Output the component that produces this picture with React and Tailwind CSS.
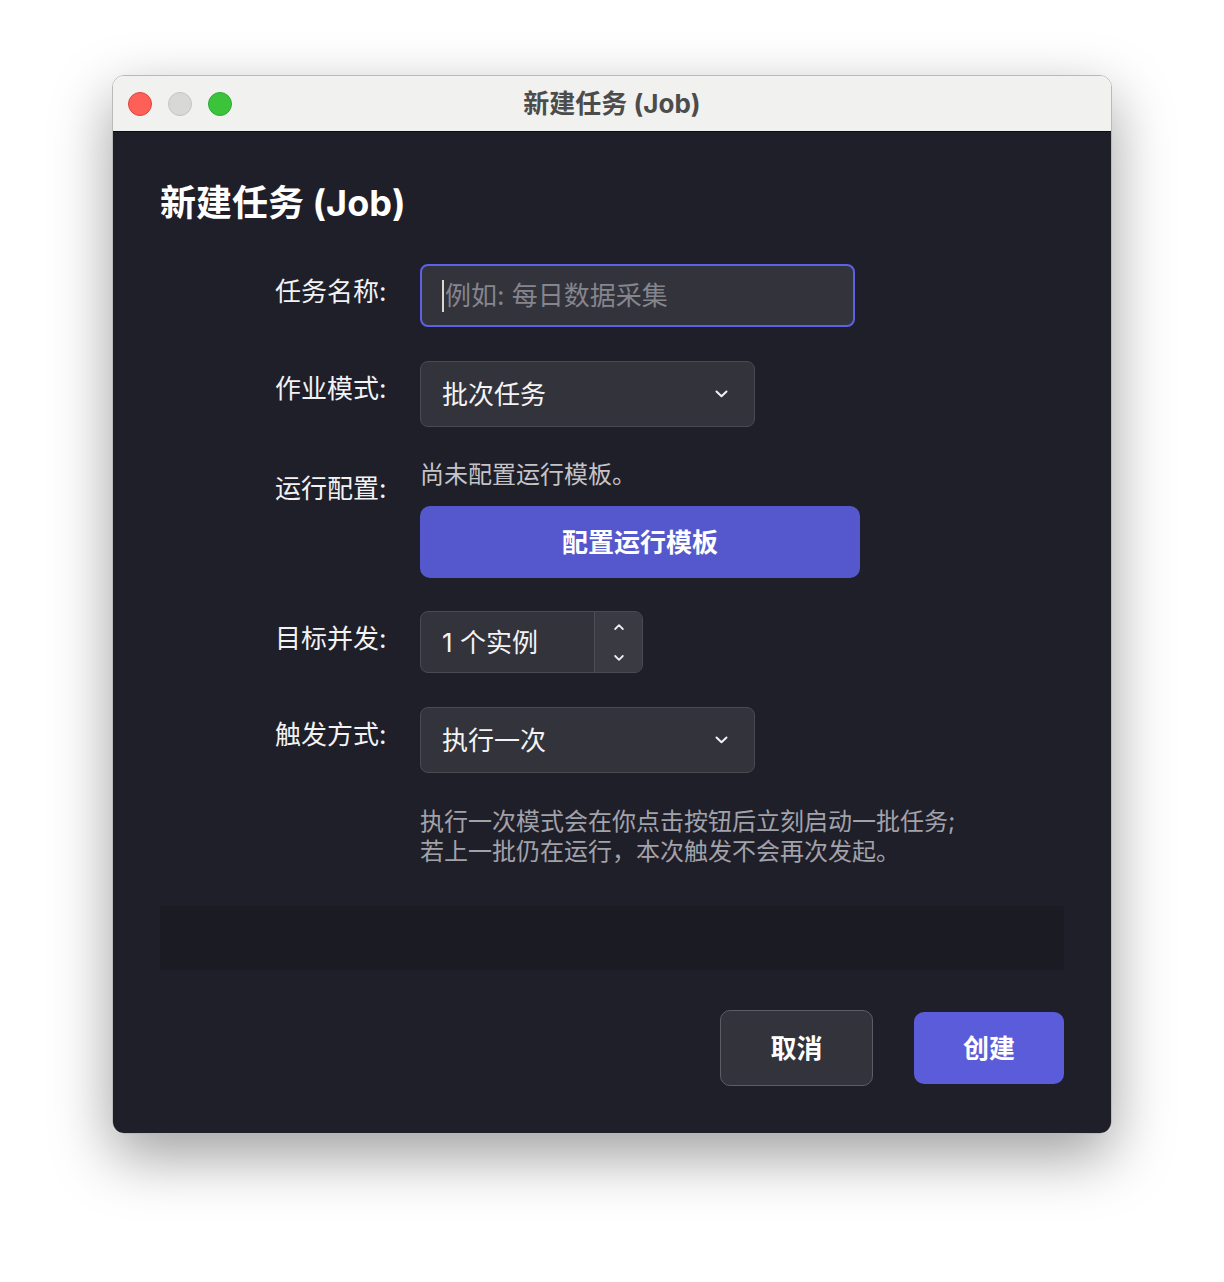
import React from "react";

const FONT = { fontFamily: 'Inter, "Noto Sans CJK SC", "Noto Sans", sans-serif' };

function Chevron({ className = "" }) {
  return (
    <svg width="13" height="8" viewBox="0 0 13 8" className={className} fill="none">
      <path d="M1.5 1.5 L6.5 6.3 L11.5 1.5" stroke="#f2f2f4" strokeWidth="2" strokeLinecap="round" strokeLinejoin="round" />
    </svg>
  );
}

function SmallChevron({ up }) {
  return (
    <svg width="10" height="6" viewBox="0 0 10 6" fill="none">
      <path
        d={up ? "M1.2 5 L5 1.2 L8.8 5" : "M1.2 1 L5 4.8 L8.8 1"}
        stroke="#ededf0"
        strokeWidth="1.8"
        strokeLinecap="round"
        strokeLinejoin="round"
      />
    </svg>
  );
}

function Label({ children }) {
  return (
    <div className="w-[227px] shrink-0 pr-0 text-right text-[26px] leading-[36px] pt-[10px] text-[#f2f2f4]">
      <span className="inline-block w-[112px] text-left">{children}</span>
    </div>
  );
}

function Row({ label, children, className = "" }) {
  return (
    <div className={"flex items-start gap-[33px] " + className}>
      <Label>{label}</Label>
      <div className="flex flex-col">{children}</div>
    </div>
  );
}

function Select({ value }) {
  return (
    <div className="flex h-[66px] w-[335px] items-center justify-between rounded-[8px] border border-[#4a4a53] bg-[#33333c] pl-[21px] pr-[26px] text-[26px] text-[#f4f4f6]">
      <span>{value}</span>
      <Chevron />
    </div>
  );
}

export default function App() {
  return (
    <div className="h-[1282px] w-[1224px] overflow-hidden bg-white pt-[75px]" style={FONT}>
      <div className="ml-[112px] flex h-[1059px] w-[1000px] flex-col overflow-hidden rounded-[12px] border border-[#b9b9b9] shadow-[0_22px_60px_rgba(0,0,0,0.38)]">
        {/* title bar */}
        <div className="grid h-[56px] shrink-0 grid-cols-[1fr_auto_1fr] items-center border-b border-[#0d0d10] bg-[#f1f1ef]">
          <div className="flex items-center gap-[16px] pl-[15px]">
            <span className="h-[24px] w-[24px] rounded-full border border-[#e0443e] bg-[#fe5f57]" />
            <span className="h-[24px] w-[24px] rounded-full border border-[#c3c3c1] bg-[#d8d8d6]" />
            <span className="h-[24px] w-[24px] rounded-full border border-[#2fa836] bg-[#3bc43b]" />
          </div>
          <div className="text-[26px] font-bold text-[#4c4c4c]">新建任务 (Job)</div>
          <div />
        </div>

        {/* body */}
        <div className="flex flex-1 flex-col bg-[#1f1f29] px-[47px] pt-[49px]">
          <h1 className="text-[36px] font-bold leading-[44px] text-white">新建任务 (Job)</h1>

          <div className="mt-[39px] flex flex-col">
            <Row label="任务名称:">
              <div className="flex h-[63px] w-[435px] items-center rounded-[8px] border-2 border-[#5e60e6] bg-[#33333c] pl-[20px] text-[26px]">
                <span className="mr-[1px] h-[32px] w-[2px] bg-[#d8d8cc]" />
                <span className="text-[#85858d]">例如: 每日数据采集</span>
              </div>
            </Row>

            <Row label="作业模式:" className="mt-[34px]">
              <Select value="批次任务" />
            </Row>

            <Row label="运行配置:" className="mt-[34px]">
              <div className="text-[24px] leading-[28px] text-[#c4c4c8]">尚未配置运行模板。</div>
              <button className="mt-[17px] flex h-[72px] w-[440px] items-center justify-center rounded-[10px] bg-[#5558cc] text-[26px] font-bold text-white">
                配置运行模板
              </button>
            </Row>

            <Row label="目标并发:" className="mt-[33px]">
              <div className="flex h-[62px] w-[223px] overflow-hidden rounded-[8px] border border-[#4a4a53] bg-[#33333c]">
                <div className="flex flex-1 items-center pl-[21px] text-[26px] text-[#f4f4f6]">1 个实例</div>
                <div className="flex w-[48px] flex-col items-center justify-center gap-[25px] border-l border-[#4e4e57] bg-[#3a3a43]">
                  <SmallChevron up />
                  <SmallChevron />
                </div>
              </div>
            </Row>

            <Row label="触发方式:" className="mt-[34px]">
              <Select value="执行一次" />
            </Row>

            <div className="mt-[34px] pl-[260px] text-[24px] leading-[30px] text-[#a2a2aa]">
              执行一次模式会在你点击按钮后立刻启动一批任务;
              <br />
              若上一批仍在运行，本次触发不会再次发起。
            </div>
          </div>

          <div className="mt-[39px] h-[64px] w-full bg-[#1b1b23]" />

          <div className="mt-[40px] flex items-center justify-end gap-[41px]">
            <button className="flex h-[76px] w-[153px] items-center justify-center rounded-[10px] border border-[#5c5c64] bg-[#33333c] text-[26px] font-semibold text-white">
              取消
            </button>
            <button className="flex h-[72px] w-[150px] items-center justify-center rounded-[10px] bg-[#5b5cd9] text-[26px] font-semibold text-white">
              创建
            </button>
          </div>
        </div>
      </div>
    </div>
  );
}
